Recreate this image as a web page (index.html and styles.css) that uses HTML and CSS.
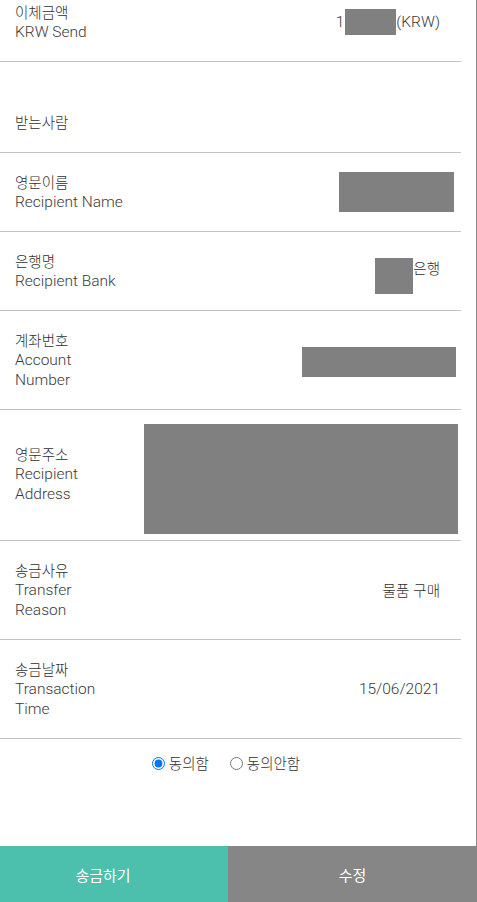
FILE: index.html
```html
<!DOCTYPE html>
<html lang="ko">
<head>
    <meta charset="UTF-8">
    <meta name="viewport" content="width=device-width, initial-scale=1.0">
    <title>송금 확인</title>
    <link rel="stylesheet" href="styles.css">
</head>
<body>

<div class="page">
    <main class="sheet">
        <div class="info-list">
            <div class="info-row first">
                <div class="label">
                    <span class="ko">이체금액</span>
                    <span>KRW Send</span>
                </div>
                <div class="value">1<span class="mask mask-amount"></span>(KRW)</div>
            </div>

            <div class="info-row section">
                <div class="label"><span class="ko">받는사람</span></div>
            </div>

            <div class="info-row">
                <div class="label">
                    <span class="ko">영문이름</span>
                    <span>Recipient Name</span>
                </div>
                <div class="value"><span class="mask mask-name"></span></div>
            </div>

            <div class="info-row">
                <div class="label">
                    <span class="ko">은행명</span>
                    <span>Recipient Bank</span>
                </div>
                <div class="value value-bank"><span class="mask mask-bank"></span><span class="ko">은행</span></div>
            </div>

            <div class="info-row">
                <div class="label">
                    <span class="ko">계좌번호</span>
                    <span>Account</span>
                    <span>Number</span>
                </div>
                <div class="value value-account"><span class="mask mask-account"></span></div>
            </div>

            <div class="info-row address">
                <div class="label">
                    <span class="ko">영문주소</span>
                    <span>Recipient</span>
                    <span>Address</span>
                </div>
                <div class="value"><span class="mask mask-address"></span></div>
            </div>

            <div class="info-row">
                <div class="label">
                    <span class="ko">송금사유</span>
                    <span>Transfer</span>
                    <span>Reason</span>
                </div>
                <div class="value"><span class="ko">물품 구매</span></div>
            </div>

            <div class="info-row">
                <div class="label">
                    <span class="ko">송금날짜</span>
                    <span>Transaction</span>
                    <span>Time</span>
                </div>
                <div class="value">15/06/2021</div>
            </div>
        </div>

        <div class="agree">
            <label class="option"><input type="radio" name="agree" value="yes" checked><span>동의함</span></label>
            <label class="option"><input type="radio" name="agree" value="no"><span>동의안함</span></label>
        </div>
    </main>

    <footer class="actions">
        <button class="btn btn-send">송금하기</button>
        <button class="btn btn-edit">수정</button>
    </footer>
</div>

</body>
</html>
```

FILE: styles.css
```css
body {
    margin: 0;
    padding: 0;
    background-color: #fff;
    font-family: Roboto, "Noto Sans CJK KR", sans-serif;
    font-weight: 300;
    color: #3a3a3a;
    overflow: hidden;
}
.page {
    display: flex;
    flex-direction: column;
    height: 902px;
}
.sheet {
    flex: 1;
    overflow: hidden;
    border-right: 1px solid #8a8a8a;
}
.info-list {
    width: 461px;
    margin-top: -17px;
}
.info-row {
    display: flex;
    justify-content: space-between;
    align-items: center;
    padding: 19px 21px 19px 15px;
    border-bottom: 1px solid #c3c3c3;
}
.label {
    display: flex;
    flex-direction: column;
    font-size: 15.5px;
    line-height: 20px;
    white-space: nowrap;
}
.ko {
    font-family: "Noto Sans CJK KR", sans-serif;
    font-size: 14.5px;
    font-weight: 300;
    color: #2e2e2e;
}
.value {
    display: flex;
    align-items: center;
    font-size: 15.5px;
    line-height: 20px;
    white-space: nowrap;
}
.mask {
    display: block;
    background-color: #808080;
}
.info-row.section {
    padding-top: 50px;
    padding-bottom: 20px;
}
.mask-amount {
    width: 51px;
    height: 26px;
    margin-left: 1px;
}
.mask-name {
    width: 115px;
    height: 40px;
    margin-right: -14px;
}
.value-bank {
    align-self: flex-start;
    align-items: flex-start;
    margin: 7px 0 -3px;
}
.mask-bank {
    width: 38px;
    height: 36px;
}
.value-account {
    align-self: flex-start;
    margin-top: 17px;
}
.mask-account {
    width: 154px;
    height: 30px;
    margin-right: -16px;
}
.info-row.address {
    align-items: flex-start;
    padding-top: 14px;
    padding-bottom: 6px;
}
.info-row.address .label {
    margin-top: 20px;
}
.mask-address {
    width: 314px;
    height: 110px;
    margin-right: -18px;
}
.agree {
    width: 447px;
    padding: 14px 14px 0 0;
    display: flex;
    justify-content: center;
    gap: 16px;
    font-family: "Noto Sans CJK KR", sans-serif;
    font-size: 14.5px;
    font-weight: 300;
    line-height: 20px;
    color: #2e2e2e;
}
.option {
    display: inline-flex;
    align-items: center;
}
.option input {
    margin: 0 4px 0 5px;
}
.actions {
    display: flex;
    height: 56px;
}
.btn {
    border: none;
    padding: 0;
    color: #fff;
    font-family: "Noto Sans CJK KR", sans-serif;
    font-size: 15px;
    cursor: pointer;
}
.btn-send {
    width: 228px;
    padding-right: 22px;
    background-color: #4cbfad;
}
.btn-edit {
    flex: 1;
    background-color: #868686;
}
```
